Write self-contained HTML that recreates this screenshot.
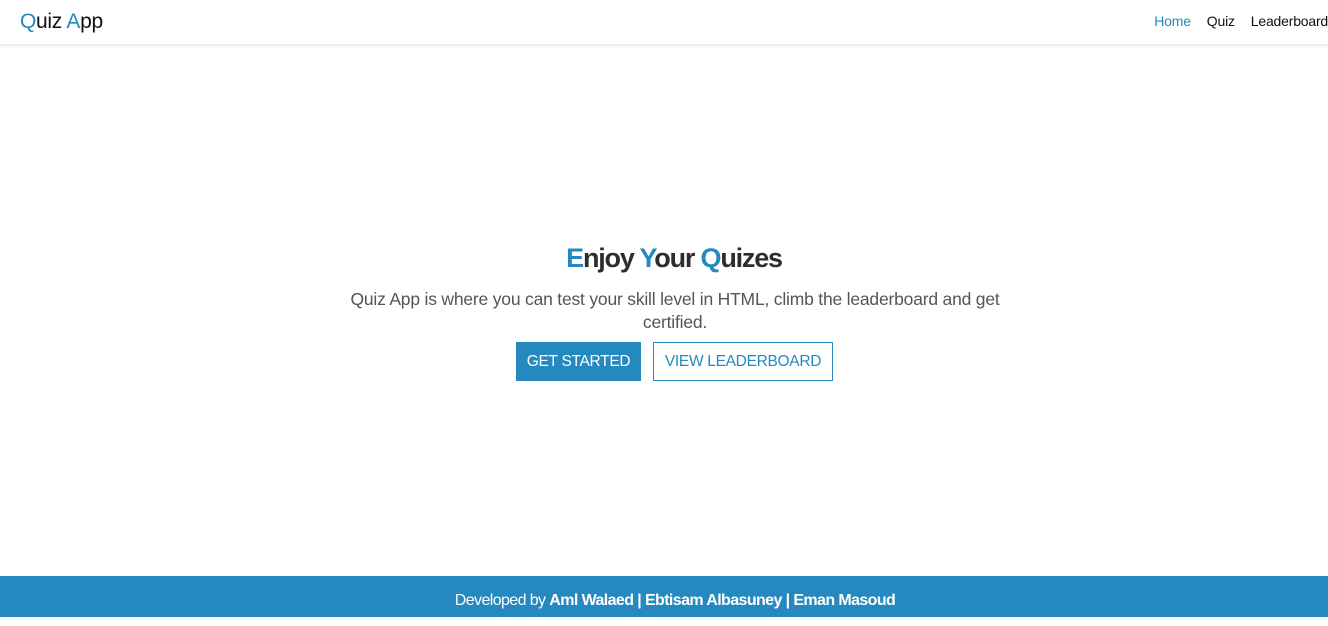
<!DOCTYPE html>
<html><head><meta charset="utf-8"><style>
*{margin:0;padding:0;box-sizing:border-box}
body{width:1328px;height:617px;background:#fff;font-family:"Liberation Sans",sans-serif;position:relative;overflow:hidden;color:#222}
.nav{height:46px;border-bottom:2px solid #eee;box-shadow:0 1px 3px rgba(0,0,0,.05);position:relative}
.logo{position:absolute;left:20px;top:10px;font-size:21px;color:#111;letter-spacing:-0.3px}
.b{color:#2589c0}
.links{position:absolute;right:0;top:13px;font-size:14px;letter-spacing:-0.2px}
.links span{margin-left:16px;color:#111}
.links span.b{color:#2589c0}
h1{position:absolute;top:243px;left:0;width:1328px;padding-left:20px;text-align:center;font-size:27px;font-weight:bold;color:#2d2d2d;letter-spacing:-1.2px}
p{position:absolute;top:288px;left:330px;width:690px;text-align:center;font-size:17.5px;line-height:23px;color:#555;letter-spacing:-0.2px}
.btn{position:absolute;top:342px;height:39px;font-size:15.5px;line-height:37px;text-align:center;letter-spacing:-0.3px}
.g{left:516px;width:125px;background:#2589c0;color:#fff;border:1px solid #2589c0}
.v{left:653px;width:180px;border:1px solid #2589c0;color:#2589c0}
.foot{position:absolute;left:0;top:576px;width:1328px;height:41px;background:#2589c0;color:#fff;text-align:center;font-size:16px;line-height:50px;letter-spacing:-0.6px;padding-left:22px}
</style></head><body>
<div class="nav"><div class="logo"><span class="b">Q</span>uiz <span class="b">A</span>pp</div>
<div class="links"><span class="b">Home</span><span>Quiz</span><span>Leaderboard</span></div></div>
<h1><span class="b">E</span>njoy <span class="b">Y</span>our <span class="b">Q</span>uizes</h1>
<p>Quiz App is where you can test your skill level in HTML, climb the leaderboard and get certified.</p>
<div class="btn g">GET STARTED</div>
<div class="btn v">VIEW LEADERBOARD</div>
<div class="foot">Developed by <b>Aml Walaed | Ebtisam Albasuney | Eman Masoud</b></div>
</body></html>
